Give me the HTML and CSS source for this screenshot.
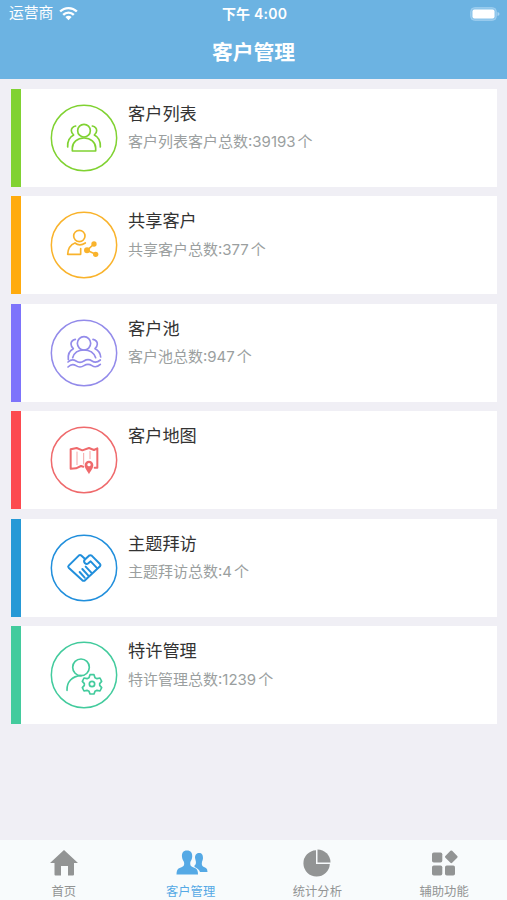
FILE: index.html
```
<!DOCTYPE html>
<html lang="zh-CN">
<head>
  <meta charset="utf-8">
  <title>客户管理</title>
  <link rel="stylesheet" href="styles.css">
</head>
<body>
  <header class="header">
    <div class="status">
      <div class="carrier">
        <span>运营商</span>
        <svg class="wifi" viewBox="0 0 20 15">
          <path d="M1.200 5.400a12.500 12.500 0 0 1 17.600 0M4.400 8.900a7.900 7.900 0 0 1 11.200 0" fill="none" stroke="#fff" stroke-width="2.500"/>
          <path d="M6.700 11.300a4.800 4.800 0 0 1 6.600 0L10 14.600z" fill="#fff"/>
        </svg>
      </div>
      <div class="time">下午 4:00</div>
      <svg class="battery" viewBox="0 0 30 14">
        <rect x="0.7" y="0.7" width="25.6" height="12.6" rx="3.8" fill="#8dc5eb" stroke="#a0cfef"/>
        <rect x="2.5" y="2.5" width="22" height="9" rx="2" fill="#fff"/>
        <path d="M27.5 5v4q2-.6 2-2t-2-2z" fill="#a9d4f1"/>
      </svg>
    </div>
    <h1 class="title">客户管理</h1>
  </header>

  <main class="list">
    <div class="card green">
      <svg class="icon" viewBox="0 0 204 204">
        <circle class="ring" cx="102" cy="102" r="98"/>
        <circle cx="102" cy="80" r="19"/>
        <path d="M67 141v-9c0-17 15-30 35-30s35 13 35 30v9z"/>
        <path d="M77 66c-8 2-13 7-13 14 0 5 3 9 7 13-12 6-19 17-18 36M127 66c8 2 13 7 13 14 0 5-3 9-7 13 12 6 19 17 18 36"/>
      </svg>
      <div class="info">
        <h2>客户列表</h2>
        <p>客户列表客户总数:39193<span class="unit">个</span></p>
      </div>
    </div>

    <div class="card orange">
      <svg class="icon" viewBox="0 0 204 204">
        <circle class="ring" cx="102" cy="102" r="98"/>
        <circle cx="88" cy="75" r="17"/>
        <path d="M75 96c-13 5-21 15-22 34h39v-17M75 96c9 7 20 7 31 0"/>
        <path d="M132 99l-21 19 26 12"/>
        <g class="solid">
          <circle cx="132" cy="99" r="8"/>
          <circle cx="111" cy="118" r="9"/>
          <circle cx="137" cy="130" r="8"/>
        </g>
      </svg>
      <div class="info">
        <h2>共享客户</h2>
        <p>共享客户总数:377<span class="unit">个</span></p>
      </div>
    </div>

    <div class="card purple">
      <svg class="icon" viewBox="0 0 204 204">
        <circle class="ring" cx="102" cy="102" r="98"/>
        <circle cx="102" cy="73" r="20"/>
        <path d="M68 116c4-14 17-23 34-23s30 9 35 23"/>
        <path d="M76 61c-8 2-13 7-13 14 0 6 3 10 7 14-12 6-17 16-15 33M129 61c8 2 13 7 13 14 0 6-3 10-7 14 11 5 16 14 17 25"/>
        <path d="M54 129q12-11 24-3t24 0 24 0 25-3M54 144q12-12 24-4t24 0 24 0 25-4"/>
      </svg>
      <div class="info">
        <h2>客户池</h2>
        <p>客户池总数:947<span class="unit">个</span></p>
      </div>
    </div>

    <div class="card red">
      <svg class="icon" viewBox="0 0 204 204">
        <circle class="ring" cx="102" cy="102" r="98"/>
        <path class="bold" d="M100 122l-7-2-15 7-16 1V70l18-4 17 7 20-7 15 6 10-5v58h-8"/>
        <path class="thin" d="M81 78v38M101 82v32M120 76v22"/>
        <path class="solid" d="M117 145c-4-10-13-17-13-28a13 13 0 0 1 26 0c0 11-9 18-13 28z"/>
        <circle class="hole" cx="117" cy="116" r="5"/>
      </svg>
      <div class="info">
        <h2>客户地图</h2>
      </div>
    </div>

    <div class="card blue">
      <svg class="icon" viewBox="0 0 204 204">
        <circle class="ring" cx="102" cy="102" r="98"/>
        <path class="bold" d="M106 76L93 64q-3-2-6 0L56 95q-3 3 0 6l41 38q4 3 8 0l45-42q3-4 0-7l-25-25q-4-3-8 0l-13 12q-4 6 1 11 5 4 10 0l7-6 17 18"/>
        <path class="bold" d="M89 114l15 17M97 105l18 20M107 98l17 18"/>
      </svg>
      <div class="info">
        <h2>主题拜访</h2>
        <p>主题拜访总数:4<span class="unit">个</span></p>
      </div>
    </div>

    <div class="card mint">
      <svg class="icon" viewBox="0 0 204 204">
        <circle class="ring" cx="102" cy="102" r="98"/>
        <circle cx="93" cy="79" r="25"/>
        <path d="M51 148c-1-25 15-43 42-44"/>
        <path d="M120 101h12l3 9 6 3 9-2 5 10-6 7v5l6 7-5 10-9-2-6 3-3 8h-12l-3-8-6-3-9 2-5-10 6-7v-5l-6-7 5-10 9 2 6-3z"/>
        <circle cx="126" cy="129" r="8"/>
      </svg>
      <div class="info">
        <h2>特许管理</h2>
        <p>特许管理总数:1239<span class="unit">个</span></p>
      </div>
    </div>
  </main>

  <nav class="tabbar">
    <div class="tab">
      <svg viewBox="0 0 30 30">
        <path d="M15 2L29 15h-4v11.500q0 1-1 1h-5V18h-7v9.500H6.500q-1 0-1-1V15H1z"/>
      </svg>
      <span>首页</span>
    </div>
    <div class="tab active">
      <svg viewBox="0 0 30 30">
        <path d="M18.500 17.500c3-2 .5-6 .5-8s1-4.500 4-4.500 4 2 4 5c0 2-1 3-1 4-.5 2 0 4 1 4.500l3 1.500q1.500 1 1.500 4h-7.500q-1-3-5.500-5z"/>
        <path d="M11 2.500c4 0 5.500 2.500 5.200 6.500-.2 3-2 4-2 6 0 2 .3 3 2.300 4l3.500 1.500q2 1.500 2 6H.500q0-4.500 2-6L6 19c2-1 2.200-2 2.200-4 0-2-2-3-2.200-6-.3-4 1-6.500 5-6.500z"/>
      </svg>
      <span>客户管理</span>
    </div>
    <div class="tab">
      <svg viewBox="0 0 30 30">
        <path d="M14 2.200A13.200 13.200 0 1 0 27.800 16H14z"/>
        <path d="M15.500 1.500a13 13 0 0 1 13 13h-13z"/>
      </svg>
      <span>统计分析</span>
    </div>
    <div class="tab">
      <svg viewBox="0 0 30 30">
        <rect x="3" y="4.500" width="10.300" height="10" rx="1.800"/>
        <rect x="3" y="17.500" width="10.300" height="10" rx="1.800"/>
        <rect x="16" y="17.500" width="10" height="10" rx="1.800"/>
        <rect x="17.500" y="4" width="9.600" height="9.600" rx="1.200" transform="rotate(45 22.300 8.800)"/>
      </svg>
      <span>辅助功能</span>
    </div>
  </nav>
</body>
</html>
```
FILE: styles.css
```
* {
  margin: 0;
  padding: 0;
  box-sizing: border-box;
}

body {
  height: 100vh;
  display: flex;
  flex-direction: column;
  font-family: Inter, "Noto Sans CJK SC", sans-serif;
  background: #f0eff5;
  overflow: hidden;
}

.header {
  height: 79px;
  flex: none;
  background: #6cb3e2;
  color: #fff;
}

.status {
  height: 27px;
  padding: 0 7px 0 9px;
  display: grid;
  grid-template-columns: 1fr auto 1fr;
  align-items: center;
  font-size: 14.8px;
  line-height: 27px;
}

.carrier {
  display: flex;
  align-items: center;
  gap: 6px;
}

.wifi {
  width: 19px;
  height: 15px;
}

.time {
  font-size: 14px;
  font-weight: 600;
  letter-spacing: 0.2px;
}

.battery {
  width: 30px;
  height: 14px;
  justify-self: end;
}

.title {
  font-size: 20.8px;
  font-weight: 600;
  line-height: 51px;
  text-align: center;
}

.list {
  flex: 1;
  padding: 9.5px 10px 0 11px;
  display: flex;
  flex-direction: column;
  gap: 9.5px;
}

.card {
  height: 98px;
  padding: 15px 0 0 29px;
  display: flex;
  gap: 10px;
  background: #fff;
  border-left: 10px solid currentColor;
}

.green { color: #80d232; }
.orange { color: #ffab0e; }
.purple { color: #7d73fb; }
.red { color: #fc4a50; }
.blue { color: #2699d6; }
.mint { color: #43cb9d; }

.icon {
  width: 68px;
  height: 68px;
  flex: none;
  fill: none;
  stroke: currentColor;
  stroke-width: 5;
  stroke-linecap: round;
  stroke-linejoin: round;
}

.purple .icon { color: #938bea; }
.red .icon { color: #ef6a6c; }
.blue .icon { color: #218fdc; }
.orange .icon { color: #f9b32c; }

.icon .ring {
  stroke-width: 4.5;
}

.icon .solid {
  fill: currentColor;
  stroke: none;
}

.icon .hole {
  fill: #fff;
  stroke: none;
}

.icon .thin {
  stroke-width: 3;
  opacity: 0.6;
}

.icon .bold {
  stroke-width: 6;
}

.info h2 {
  margin-top: -3px;
  font-size: 17.2px;
  font-weight: 400;
  line-height: 25px;
  color: #333;
}

.info p {
  margin-top: 5.5px;
  font-size: 15px;
  line-height: 22px;
  color: #9b9f9f;
}

.unit {
  margin-left: 2px;
}

.tabbar {
  height: 60px;
  flex: none;
  display: grid;
  grid-template-columns: repeat(4, 1fr);
  background: #f8fbfc;
}

.tab {
  padding: 8px 0 0 1px;
  display: flex;
  flex-direction: column;
  align-items: center;
  font-size: 12.3px;
  line-height: 18px;
  color: #929494;
}

.tab svg {
  width: 30px;
  height: 30px;
  margin-bottom: 5px;
  fill: currentColor;
  overflow: visible;
}

.tab.active {
  color: #55a9e5;
}
```
